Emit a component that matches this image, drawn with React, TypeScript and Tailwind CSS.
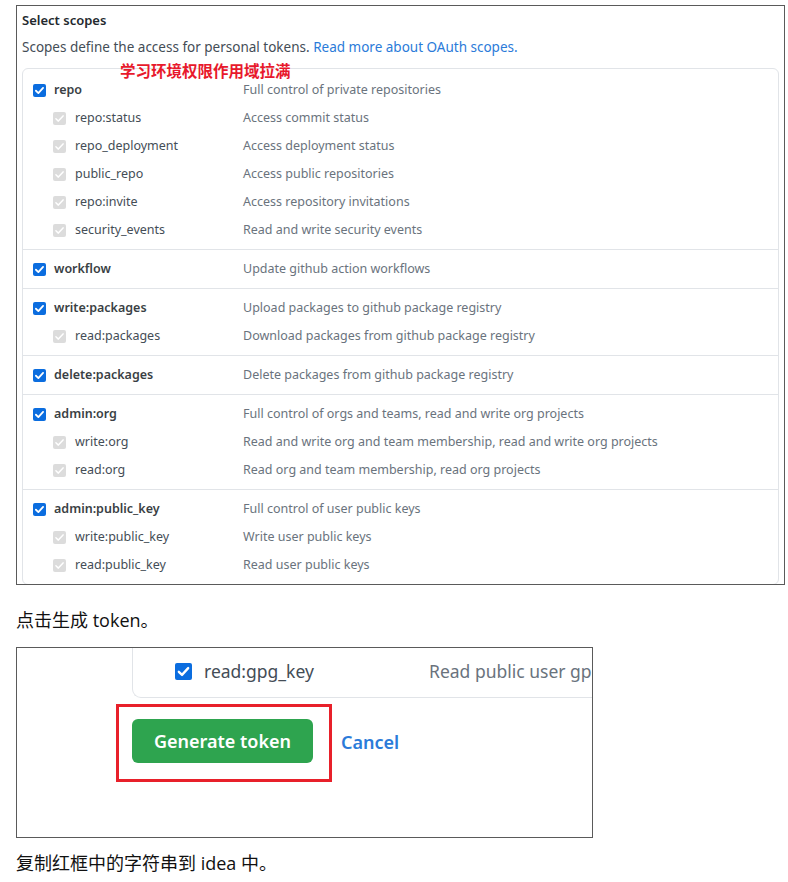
import React from "react";

type Row = { name: string; desc: string; sub?: boolean };

const groups: Row[][] = [
  [
    { name: "repo", desc: "Full control of private repositories" },
    { name: "repo:status", desc: "Access commit status", sub: true },
    { name: "repo_deployment", desc: "Access deployment status", sub: true },
    { name: "public_repo", desc: "Access public repositories", sub: true },
    { name: "repo:invite", desc: "Access repository invitations", sub: true },
    { name: "security_events", desc: "Read and write security events", sub: true },
  ],
  [{ name: "workflow", desc: "Update github action workflows" }],
  [
    { name: "write:packages", desc: "Upload packages to github package registry" },
    { name: "read:packages", desc: "Download packages from github package registry", sub: true },
  ],
  [{ name: "delete:packages", desc: "Delete packages from github package registry" }],
  [
    { name: "admin:org", desc: "Full control of orgs and teams, read and write org projects" },
    { name: "write:org", desc: "Read and write org and team membership, read and write org projects", sub: true },
    { name: "read:org", desc: "Read org and team membership, read org projects", sub: true },
  ],
  [
    { name: "admin:public_key", desc: "Full control of user public keys" },
    { name: "write:public_key", desc: "Write user public keys", sub: true },
    { name: "read:public_key", desc: "Read user public keys", sub: true },
  ],
];

function Check({ size, disabled }: { size: number; disabled?: boolean }) {
  return (
    <span
      className={
        disabled
          ? "flex shrink-0 items-center justify-center rounded-[2px] bg-[#dcdcdc]"
          : "flex shrink-0 items-center justify-center rounded-[2px] bg-[#0b6ddf]"
      }
      style={{ width: size, height: size }}
    >
      <svg viewBox="0 0 16 16" width={size} height={size}>
        <path
          d="M3.6 8.3 L6.6 11.2 L12.4 4.8"
          fill="none"
          stroke="#ffffff"
          strokeWidth={disabled ? 1.8 : 2.2}
          strokeLinecap="round"
          strokeLinejoin="round"
        />
      </svg>
    </span>
  );
}

const ui = { fontFamily: '"Noto Sans", "Open Sans", sans-serif' };
const doc = { fontFamily: '"Open Sans", "Noto Sans CJK SC", sans-serif' };

export default function App() {
  return (
    <div className="w-[788px] h-[882px] bg-white pt-[5px]">
      {/* Box 1 */}
      <div
        className="relative ml-[16px] w-[769px] h-[580px] overflow-hidden border border-[#5a5a5a] px-[5px]"
        style={ui}
      >
        <div className="mt-[3px] text-[13px] leading-[22px] font-semibold text-[#24292e]">
          Select scopes
        </div>
        <div className="mt-[5px] text-[13.5px] leading-[22px] text-[#444d56]">
          Scopes define the access for personal tokens.{" "}
          <span className="text-[#2b7bd9]">Read more about OAuth scopes.</span>
        </div>
        <div className="mt-[10px] rounded-[6px] border border-[#e1e4e8] pt-[2px]">
          {groups.map((g, gi) => (
            <div
              key={gi}
              className={gi === 0 ? "py-[5px]" : "border-t border-[#e1e4e8] py-[5px]"}
            >
              {g.map((r) => (
                <div key={r.name} className="flex h-[28px] items-center pl-[10px]">
                  <div className="flex w-[210px] items-center">
                    {r.sub ? (
                      <>
                        <span className="ml-[20px]">
                          <Check size={13} disabled />
                        </span>
                        <span className="ml-[9px] text-[12.5px] text-[#444d56]">{r.name}</span>
                      </>
                    ) : (
                      <>
                        <Check size={13} />
                        <span className="ml-[8px] text-[12.5px] font-semibold text-[#3a3f44]">
                          {r.name}
                        </span>
                      </>
                    )}
                  </div>
                  <span className="text-[12.5px] text-[#6a737d]">{r.desc}</span>
                </div>
              ))}
            </div>
          ))}
        </div>
        <div
          className="absolute left-[103px] top-[53px] text-[15.5px] font-bold leading-[22px] text-[#e8192c]"
          style={{ fontFamily: '"Noto Sans CJK SC", sans-serif' }}
        >
          学习环境权限作用域拉满
        </div>
      </div>

      {/* Caption 1 */}
      <div className="ml-[16px] mt-[22px] text-[18px] leading-[26px] text-[#111]" style={doc}>
        点击生成 token。
      </div>

      {/* Box 2 */}
      <div className="ml-[16px] mt-[14px] w-[577px] h-[191px] overflow-hidden border border-[#5a5a5a]" style={ui}>
        <div className="ml-[115px] flex h-[50px] w-[600px] items-center rounded-bl-[9px] border-b border-l border-[#e1e4e8] pb-[2px]">
          <span className="ml-[42px]">
            <Check size={17} />
          </span>
          <span className="ml-[12px] w-[225px] text-[17.5px] text-[#444d56]">read:gpg_key</span>
          <span className="whitespace-nowrap text-[17.5px] text-[#6a737d]">Read public user gpg keys</span>
        </div>
        <div className="mt-[6px] flex items-center">
          <div className="ml-[99px] border-[3px] border-[#e8202a] pl-[13px] pr-[16px] pt-[12px] pb-[16px]">
            <div className="flex h-[44px] w-[181px] items-center justify-center rounded-[6px] bg-[#2ea44f] text-[18px] font-semibold text-white">
              Generate token
            </div>
          </div>
          <span className="ml-[9px] -mt-[2px] text-[18px] font-semibold text-[#2b7bd9]">Cancel</span>
        </div>
      </div>

      {/* Caption 2 */}
      <div className="ml-[16px] mt-[12px] text-[18px] leading-[26px] text-[#111]" style={doc}>
        复制红框中的字符串到 idea 中。
      </div>
    </div>
  );
}
